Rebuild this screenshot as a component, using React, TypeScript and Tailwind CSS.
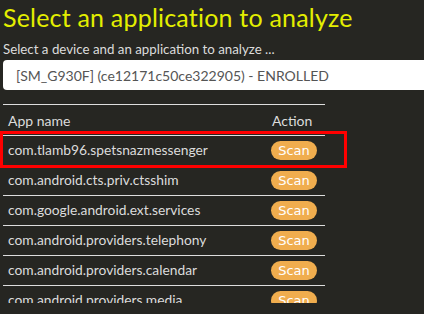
const apps = [
  "com.tlamb96.spetsnazmessenger",
  "com.android.cts.priv.ctsshim",
  "com.google.android.ext.services",
  "com.android.providers.telephony",
  "com.android.providers.calendar",
  "com.android.providers.media",
];

const App = () => {
  return (
    <div
      className="relative w-[424px] h-[314px] overflow-hidden bg-[#262622] text-[#dcdcdc]"
      style={{ fontFamily: "Lato, 'Noto Sans', sans-serif" }}
    >
      <h1 className="pl-[3px] pt-[1px] text-[25px] leading-[32px] text-[#e3ee00] font-normal tracking-[0.2px]">
        Select an application to analyze
      </h1>
      <p className="pl-[3px] mt-[8px] text-[13.3px] leading-[16px]">
        Select a device and an application to analyze ...
      </p>

      <div className="ml-[3px] mt-[3px] w-[440px] h-[30px] bg-white rounded-l-[4px] flex items-center pl-[13px] text-[14px] text-[#555]">
        [SM_G930F] (ce12171c50ce322905) - ENROLLED
      </div>

      <div className="mt-[14px] ml-[3px] w-[322px] h-[199px] overflow-hidden">
        <div className="border-t border-[#ddd]">
          <div className="flex items-center h-[30px] text-[14px]">
            <div className="flex-1 pl-[5px]">App name</div>
            <div className="w-[54px] pl-[1px]">Action</div>
          </div>
          {apps.map((name) => (
            <div key={name} className="flex items-center h-[30px] border-t border-[#ddd] text-[13.8px]">
              <div className="flex-1 pl-[5px]">{name}</div>
              <div className="w-[54px]">
                <button
                  className="h-[19px] w-[46px] rounded-full bg-[#f0ad4e] text-white text-[13px] leading-[19px]"
                  style={{ fontFamily: "'DejaVu Sans', sans-serif" }}
                >
                  Scan
                </button>
              </div>
            </div>
          ))}
        </div>
      </div>
      <div className="absolute left-0 top-[131px] w-[347px] h-[37px] border-[3px] border-[#ff0000] pointer-events-none" />
    </div>
  );
};

export default App;
